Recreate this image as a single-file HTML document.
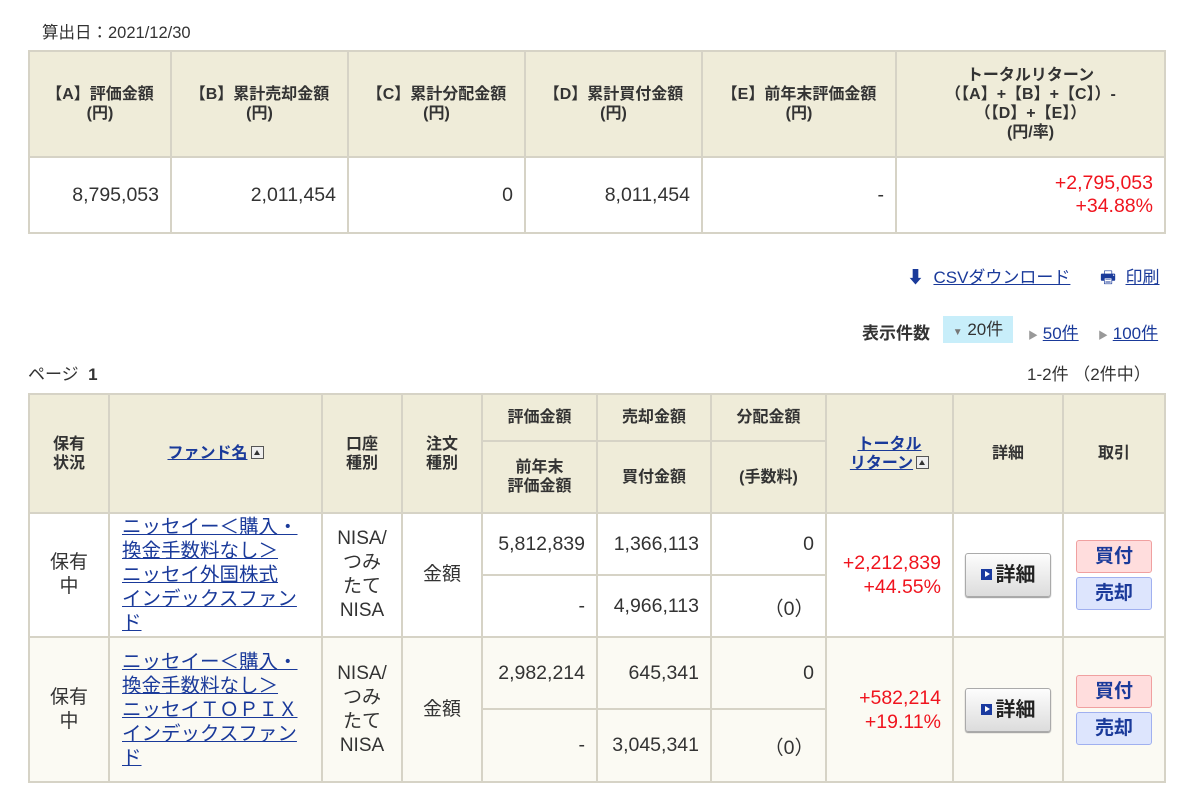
<!DOCTYPE html><html><head><meta charset="utf-8"><style>
body{margin:0;width:1200px;height:798px;background:#fff;font-family:"Liberation Sans","Noto Sans CJK JP",sans-serif;color:#333;position:relative;overflow:hidden}
.a{position:absolute}
table{border-collapse:collapse;position:absolute;table-layout:fixed}
td,th{border:2px solid #d6d3c6;padding:0 10px;box-sizing:border-box}
th{background:#efecd9;font-size:16px;font-weight:bold;color:#333;line-height:19px}
.n{text-align:right;font-size:19.5px;padding-right:11px}
.r{color:#f0141e}
a{color:#1a3a9a;text-decoration:underline}
.btn{display:inline-block;width:84px;height:42px;border:1px solid #aaa;border-radius:3px;background:linear-gradient(#fdfdfd,#dcdcdc);font-weight:bold;font-size:20px;line-height:42px;color:#222;box-shadow:0 1px 1px #999}
.sq{display:inline-block;width:11px;height:11px;background:#1a3aa0;vertical-align:1px;margin-right:4px;position:relative}
.sq:after{content:"";position:absolute;left:4px;top:2px;border-left:5px solid #fff;border-top:3.5px solid transparent;border-bottom:3.5px solid transparent}
.buy,.sell{display:block;width:74px;height:31px;margin:4px auto;border-radius:3px;font-weight:bold;font-size:19px;line-height:31px;color:#1a3a9a;text-align:center}
.buy{background:#fdd;border:1px solid #f0a0a0}
.sell{background:#dde5fd;border:1px solid #a0b0f0}
.up{display:inline-block;width:13px;height:13px;border:1px solid #555;background:#eee;vertical-align:-1px;position:relative;margin-left:3px;box-sizing:border-box}
.up:after{content:"";position:absolute;left:2px;top:3px;border-bottom:5px solid #333;border-left:3.5px solid transparent;border-right:3.5px solid transparent}
.fn{font-size:19.5px;line-height:24px;padding:0 10px 0 12px}
.c{text-align:center;font-size:19px;line-height:24px}
</style></head><body>
<div class="a" style="left:42px;top:19px;font-size:16.5px">算出日：2021/12/30</div>
<table style="left:28px;top:50px;width:1136px">
<colgroup><col style="width:142px"><col style="width:177px"><col style="width:177px"><col style="width:177px"><col style="width:194px"><col style="width:269px"></colgroup>
<tr style="height:106px"><th>【A】評価金額<br>(円)</th><th>【B】累計売却金額<br>(円)</th><th>【C】累計分配金額<br>(円)</th><th>【D】累計買付金額<br>(円)</th><th>【E】前年末評価金額<br>(円)</th><th>トータルリターン<br>（【A】+【B】+【C】）-<br>（【D】+【E】）<br>(円/率)</th></tr>
<tr style="height:76px"><td class="n">8,795,053</td><td class="n">2,011,454</td><td class="n">0</td><td class="n">8,011,454</td><td class="n">-</td><td class="n r">+2,795,053<br>+34.88%</td></tr>
</table>
<div class="a" style="left:907px;top:263px;font-size:17px"><span style="color:#1a3a9a">&#x2B07;</span>&nbsp; <a>CSVダウンロード</a></div>
<div class="a" style="left:1100px;top:263px;font-size:17px"><span style="color:#1a3a9a">&#x1F5B6;</span>&nbsp; <a>印刷</a></div>
<div class="a" style="left:862px;top:319px;font-size:17px;font-weight:bold">表示件数</div>
<div class="a" style="left:943px;top:316px;width:70px;height:27px;background:#c8eefa;font-size:17px;line-height:27px;text-align:center"><span style="font-size:10px;color:#777">▼</span> 20件</div>
<div class="a" style="left:1028px;top:319px;font-size:17px"><span style="font-size:10px;color:#999">▶</span>&nbsp;<a>50件</a></div>
<div class="a" style="left:1098px;top:319px;font-size:17px"><span style="font-size:10px;color:#999">▶</span>&nbsp;<a>100件</a></div>
<div class="a" style="left:28px;top:360px;font-size:17px">ページ&nbsp; <b>1</b></div>
<div class="a" style="left:1027px;top:360px;font-size:17px">1-2件 （2件中）</div>
<table style="left:28px;top:393px;width:1136px">
<colgroup><col style="width:80px"><col style="width:213px"><col style="width:80px"><col style="width:80px"><col style="width:115px"><col style="width:114px"><col style="width:115px"><col style="width:127px"><col style="width:110px"><col style="width:102px"></colgroup>
<tr style="height:47px"><th rowspan="2">保有<br>状況</th><th rowspan="2"><a>ファンド名</a><span class="up"></span></th><th rowspan="2">口座<br>種別</th><th rowspan="2">注文<br>種別</th><th>評価金額</th><th>売却金額</th><th>分配金額</th><th rowspan="2"><a>トータル<br>リターン</a><span class="up"></span></th><th rowspan="2">詳細</th><th rowspan="2">取引</th></tr>
<tr style="height:72px"><th>前年末<br>評価金額</th><th>買付金額</th><th>(手数料)</th></tr>
<tr style="height:62px"><td rowspan="2" class="c">保有<br>中</td><td rowspan="2" class="fn"><a>ニッセイー＜購入・<br>換金手数料なし＞<br>ニッセイ外国株式<br>インデックスファンド</a></td><td rowspan="2" class="c">NISA/<br>つみ<br>たて<br>NISA</td><td rowspan="2" class="c">金額</td><td class="n">5,812,839</td><td class="n">1,366,113</td><td class="n">0</td><td rowspan="2" class="n r" style="line-height:24px">+2,212,839<br>+44.55%</td><td rowspan="2" style="text-align:center;padding:0"><span class="btn"><span class="sq"></span>詳細</span></td><td rowspan="2" style="padding:0"><span class="buy">買付</span><span class="sell">売却</span></td></tr>
<tr style="height:62px"><td class="n">-</td><td class="n">4,966,113</td><td class="n">（0）</td></tr>
<tr style="height:72px;background:#fbfaf3"><td rowspan="2" class="c">保有<br>中</td><td rowspan="2" class="fn"><a>ニッセイー＜購入・<br>換金手数料なし＞<br>ニッセイＴＯＰＩＸ<br>インデックスファン<br>ド</a></td><td rowspan="2" class="c">NISA/<br>つみ<br>たて<br>NISA</td><td rowspan="2" class="c">金額</td><td class="n">2,982,214</td><td class="n">645,341</td><td class="n">0</td><td rowspan="2" class="n r" style="line-height:24px">+582,214<br>+19.11%</td><td rowspan="2" style="text-align:center;padding:0"><span class="btn"><span class="sq"></span>詳細</span></td><td rowspan="2" style="padding:0"><span class="buy">買付</span><span class="sell">売却</span></td></tr>
<tr style="height:73px;background:#fbfaf3"><td class="n">-</td><td class="n">3,045,341</td><td class="n">（0）</td></tr>
</table>
</body></html>
